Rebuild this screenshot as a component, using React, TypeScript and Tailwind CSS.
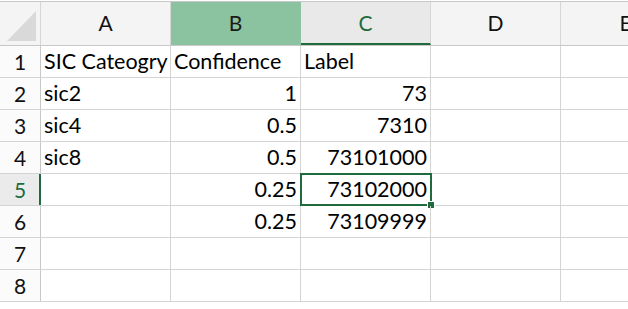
import React from "react";

const cols = ["A", "B", "C", "D", "E"];
const data: [string, string, string][] = [
  ["SIC Cateogry", "Confidence", "Label"],
  ["sic2", "1", "73"],
  ["sic4", "0.5", "7310"],
  ["sic8", "0.5", "73101000"],
  ["", "0.25", "73102000"],
  ["", "0.25", "73109999"],
  ["", "", ""],
  ["", "", ""],
];

export default function App() {
  return (
    <div
      className="w-[628px] h-[309px] overflow-hidden bg-white pt-px text-black"
      style={{ fontFamily: "Lato, 'Open Sans', sans-serif" }}
    >
      {/* header row */}
      <div className="flex h-[45px] border-t border-b border-[#c8c8c8]">
        <div className="w-[41px] shrink-0 border-r border-[#d6d6d6] bg-[#f4f4f4] relative overflow-hidden">
          <svg className="absolute left-0 top-0" width="40" height="43" viewBox="0 0 40 43">
            <polygon points="7,39 36,39 36,9" fill="#d9d9d9" />
          </svg>
        </div>
        {cols.map((c) => {
          const isB = c === "B";
          const isC = c === "C";
          return (
            <div
              key={c}
              className={
                "w-[130px] shrink-0 border-r flex items-center justify-center text-[21px] pb-[1px] " +
                (isB
                  ? "bg-[#8bc29f] border-[#8bc29f] text-[#1a1a1a]"
                  : isC
                  ? "bg-[#e9e9e9] border-[#d6d6d6] text-[#1e6b3b] border-b-2 border-b-[#1f6b3d] pt-[2px]"
                  : "bg-[#f4f4f4] border-[#d6d6d6] text-[#111]")
              }
            >
              {c}
            </div>
          );
        })}
      </div>
      {data.map((row, i) => {
        const r = i + 1;
        const sel = r === 5;
        return (
          <div key={r} className="flex h-[32px] border-b border-[#d4d4d4]">
            <div
              className={
                "w-[41px] shrink-0 flex items-end justify-center pb-[1px] text-[21px] leading-none " +
                (sel
                  ? "bg-[#ebebeb] text-[#1e6b3b] border-r-2 border-[#1f6b3d] pl-[1px]"
                  : "bg-[#fbfbfb] text-[#111] border-r border-[#c8c8c8]")
              }
            >
              <span className="pb-[4px]">{r}</span>
            </div>
            {row.map((v, j) => {
              const num = /^\d/.test(v);
              return (
                <div
                  key={j}
                  className={
                    "w-[130px] shrink-0 border-r border-[#d4d4d4] flex items-end text-[21.5px] leading-none pb-[5px] relative " +
                    (num ? "justify-end pr-[3px]" : "justify-start pl-[3px]")
                  }
                >
                  {sel && j === 2 && (
                    <div className="absolute left-[-1px] top-[-1px] right-[-2px] bottom-[-1px] border-2 border-[#1f6b3d] pointer-events-none">
                      <div className="absolute right-[-5px] bottom-[-5px] w-[6px] h-[6px] bg-[#1f6b3d] border border-white box-content" />
                    </div>
                  )}
                  <span className="whitespace-nowrap">{v}</span>
                </div>
              );
            })}
            <div className="w-[130px] shrink-0 border-r border-[#d4d4d4]" />
            <div className="w-[130px] shrink-0 border-r border-[#d4d4d4]" />
          </div>
        );
      })}
    </div>
  );
}
